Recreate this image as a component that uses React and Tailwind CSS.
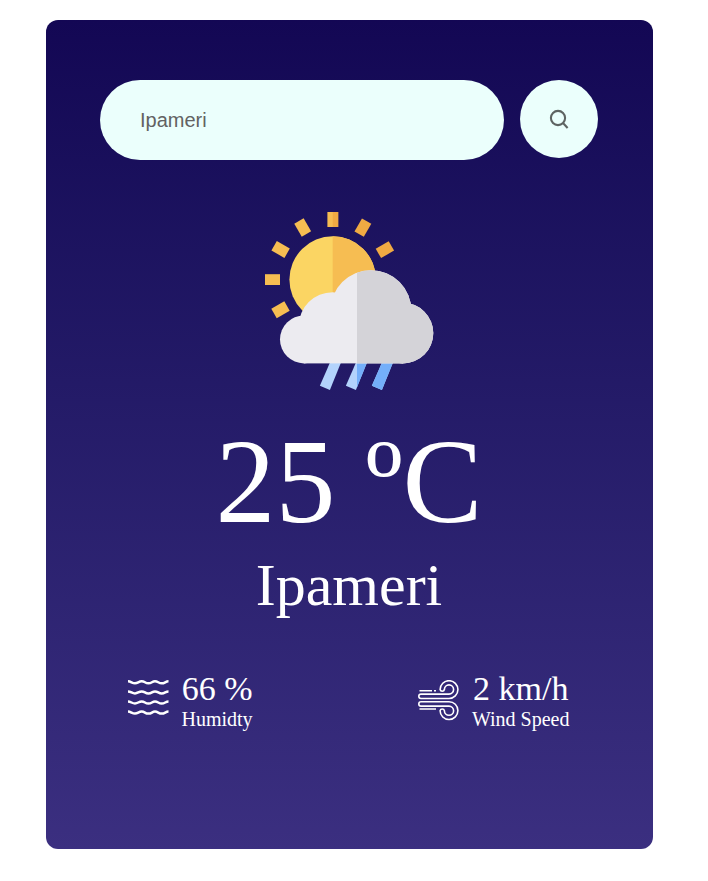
const RAYS = [-120, -90, -60, -30, 0, 30, 60];

function WeatherIcon() {
  return (
    <svg viewBox="259.8 210 180 180" className="block h-[180px] w-[180px]">
      <defs>
        <clipPath id="sunRight"><rect x="332.5" y="200" width="80" height="140" /></clipPath>
        <clipPath id="cloudRight"><rect x="356.8" y="250" width="90" height="150" /></clipPath>
        <g id="cloud">
          <circle cx="303.8" cy="339.4" r="24" />
          <circle cx="332.4" cy="326" r="33.8" />
          <circle cx="370.7" cy="310.7" r="40.5" />
          <circle cx="402.8" cy="333.1" r="30.3" />
          <rect x="303.8" y="325" width="99" height="38.4" />
        </g>
        <g id="drops">
          <path d="M330 362h11L329.7 390l-10-4.3z" />
          <path d="M356 362h11L355.7 390l-10-4.3z" />
          <path d="M382 362h11L381.7 390l-10-4.3z" />
        </g>
      </defs>
      {RAYS.map((a) => (
        <rect key={a} x="327.2" y="212" width="10.8" height="15" fill={a > 0 ? '#f0aa43' : '#f6bd52'} transform={`rotate(${a} 332.5 279.7)`} />
      ))}
      <rect x="332.5" y="212" width="5.5" height="15" fill="#f0aa43" />
      <circle cx="332.5" cy="279.6" r="43.3" fill="#fbd563" />
      <circle cx="332.5" cy="279.6" r="43.3" fill="#f6bd52" clipPath="url(#sunRight)" />
      <use href="#drops" fill="#b3d3fc" />
      <use href="#drops" fill="#74affa" clipPath="url(#cloudRight)" />
      <use href="#cloud" fill="#ecebf0" />
      <use href="#cloud" fill="#d4d3d8" clipPath="url(#cloudRight)" />
    </svg>
  );
}

function HumidityIcon() {
  return (
    <svg viewBox="0 0 41 36" className="h-9 w-[41px]" fill="none" stroke="#fff" strokeWidth="2.5">
      {[2.3, 12.4, 22.5, 32.6].map((y) => (
        <path key={y} d={`M0 ${y - 1}C3 ${y - 1} 4 ${y + 1} 7 ${y + 1}S10.500 ${y - 1} 13.700 ${y - 1}S17 ${y + 1} 20.400 ${y + 1}S24 ${y - 1} 27 ${y - 1}S30.500 ${y + 1} 33.700 ${y + 1}S37.500 ${y - 1} 40.500 ${y - 1}`} />
      ))}
    </svg>
  );
}

function WindIcon() {
  return (
    <svg viewBox="419 680 41 41" className="h-[41px] w-[41px]" fill="none" stroke="#fff" strokeWidth="1.6">
      <path d="M420.500 690.800H433M435 690.800h2M420.500 709h16.500" />
      <path d="M450 698.500H422a2.200 2.200 0 0 1 0-4.400H450a4.600 4.600 0 1 0-4.600-4.600a2.200 2.200 0 0 1-4.300 0A8.900 8.900 0 1 1 450 698.500z" />
      <path d="M450 701.700H422a2.200 2.200 0 0 0 0 4.400H450a4.600 4.600 0 1 1-4.600 4.600a2.200 2.200 0 0 0-4.300 0A8.900 8.900 0 1 0 450 701.700z" />
    </svg>
  );
}

function Detail({ icon, value, label }) {
  return (
    <div className="flex items-start">
      <div className="mt-[11px] mr-[13px] shrink-0">{icon}</div>
      <div className="text-center">
        <p className="text-[34px] leading-[39px]">{value}</p>
        <p className="text-[20px] leading-[22px]">{label}</p>
      </div>
    </div>
  );
}

export default function App() {
  return (
    <main className="min-h-[881px] bg-white pt-5 font-['Liberation_Serif',serif] text-white">
      <section className="ml-[46px] flex h-[829px] w-[607px] flex-col items-center rounded-xl bg-linear-to-b from-[#130754] to-[#3b2f80] pt-[60px]">
        <div className="flex w-[499px] gap-4">
          <input
            placeholder="Ipameri"
            className="h-20 w-[404px] rounded-full bg-[#ebfffc] px-10 font-['Liberation_Sans',sans-serif] text-[20px] text-[#555] outline-none placeholder:text-[#626262]"
          />
          <button className="h-[78px] w-[78px] rounded-full bg-[#ebfffc]">
            <svg viewBox="0 0 78 78" className="block h-[78px] w-[78px]" fill="none" stroke="#5e6462" strokeWidth="2.1">
              <circle cx="38" cy="38" r="7.1" />
              <path d="M43 43l4.600 5" />
            </svg>
          </button>
        </div>
        <div className="mt-[50px]"><WeatherIcon /></div>
        <h1 className="mt-[23px] mr-px text-[120px] leading-[138px]">25 ºC</h1>
        <h2 className="mt-px mr-px text-[60px] leading-[67px]">Ipameri</h2>
        <div className="mt-[50px] mr-[2px] flex w-[442px] justify-between">
          <Detail icon={<HumidityIcon />} value="66 %" label="Humidty" />
          <Detail icon={<WindIcon />} value="2 km/h" label="Wind Speed" />
        </div>
      </section>
    </main>
  );
}
